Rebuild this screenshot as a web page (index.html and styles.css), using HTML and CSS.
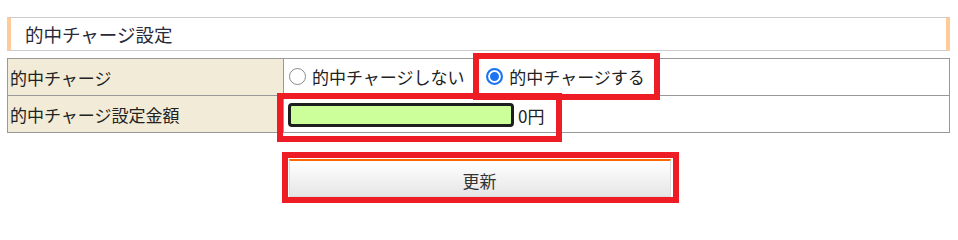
FILE: index.html
```html
<!DOCTYPE html>
<html lang="ja">
<head>
<meta charset="utf-8">
<link rel="stylesheet" href="styles.css">
</head>
<body>
<div class="page">
  <h2 class="heading">的中チャージ設定</h2>
  <table class="form">
    <tr>
      <th>的中チャージ</th>
      <td>
        <label class="opt"><input type="radio" name="charge">的中チャージしない</label>
        <label class="opt"><input type="radio" name="charge" checked>的中チャージする</label>
      </td>
    </tr>
    <tr>
      <th>的中チャージ設定金額</th>
      <td><input class="amount" type="text" value=""><span class="unit">0円</span></td>
    </tr>
  </table>
  <div class="actions">
    <button class="submit" type="button">更新</button>
  </div>
  <div class="mark mark-radio"></div>
  <div class="mark mark-amount"></div>
  <div class="mark mark-button"></div>
</div>
</body>
</html>
```

FILE: styles.css
```css
html, body {
  margin: 0;
  padding: 0;
  background: #fff;
}
body {
  font-family: "Noto Sans CJK JP", "Noto Sans", sans-serif;
  color: #333;
}
.page {
  position: relative;
  width: 943px;
  min-height: 193px;
  box-sizing: content-box;
  padding: 17px 0 0 7px;
}
.heading {
  margin: 0;
  height: 32px;
  line-height: 32px;
  border-top: 1px solid #ccc;
  border-bottom: 1px solid #ccc;
  border-left: 4px solid #ffcc99;
  border-right: 4px solid #ffcc99;
  padding-left: 14px;
  font-size: 18.5px;
  font-weight: normal;
  color: #2a2a3a;
}
.form {
  margin-top: 7px;
  width: 943px;
  border-collapse: collapse;
  border: 1px solid #999;
  font-size: 17px;
}
.form th,
.form td {
  border: 1px solid #999;
  height: 36px;
  padding: 0;
  text-align: left;
  font-weight: normal;
  color: #222;
}
.form th {
  width: 273px;
  background: #f1ebd7;
  padding-left: 2px;
}
.opt {
  display: inline-flex;
  align-items: center;
  margin-right: 13px;
}
.opt input {
  appearance: none;
  -webkit-appearance: none;
  box-sizing: border-box;
  margin: 0 6px 0 5px;
  width: 17px;
  height: 17px;
  border: 1.5px solid #8a8a8a;
  border-radius: 50%;
  background: #fff;
}
.opt input:checked {
  border: 2px solid #1a73f0;
  box-shadow: inset 0 0 0 2px #fff, inset 0 0 0 8px #1a73f0;
}
.amount {
  box-sizing: border-box;
  width: 226px;
  height: 24px;
  margin: 0 4px 0 4px;
  background: #ccff99;
  border: 3px solid #1e1e1e;
  border-radius: 4px;
  vertical-align: middle;
}
.unit {
  vertical-align: middle;
}
.actions {
  display: flex;
  justify-content: center;
  margin-top: 26px;
}
.submit {
  width: 382px;
  height: 38px;
  margin-left: 2px;
  border: 1px solid #ddd;
  border-top: 2px solid #ff6600;
  background: linear-gradient(#ffffff, #e6e6e6);
  font-family: inherit;
  font-size: 17px;
  color: #333;
  padding: 4px 0 0;
}
.mark {
  position: absolute;
  border: 6px solid #ee1c25;
  box-sizing: border-box;
}
.mark-radio {
  left: 473px;
  top: 53px;
  width: 187px;
  height: 47px;
}
.mark-amount {
  left: 277px;
  top: 93px;
  width: 285px;
  height: 49px;
}
.mark-button {
  left: 282px;
  top: 152px;
  width: 397px;
  height: 51px;
}
```
